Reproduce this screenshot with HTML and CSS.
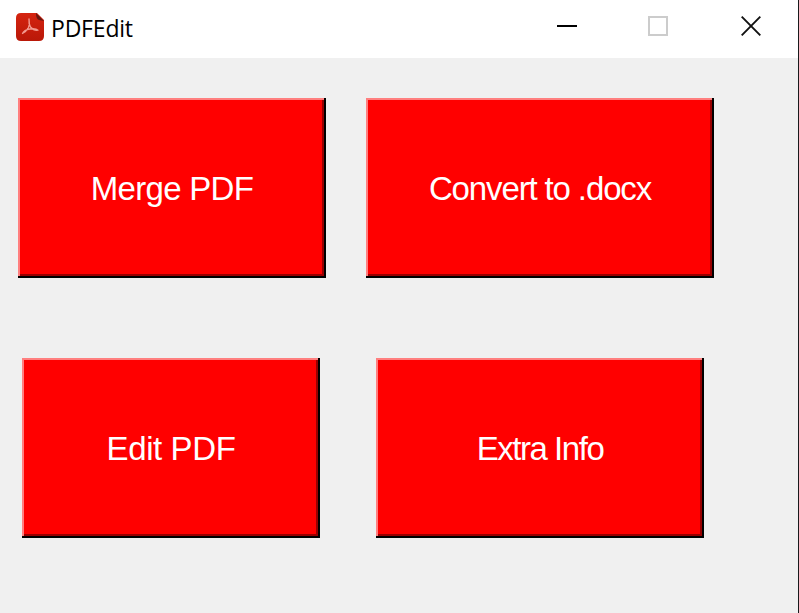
FILE: index.html
```html
<!DOCTYPE html>
<html lang="en">
<head>
<meta charset="utf-8">
<title>PDFEdit</title>
<link rel="stylesheet" href="styles.css">
</head>
<body>
<div class="window">
  <header class="titlebar">
    <svg class="app-icon" width="30" height="30" viewBox="0 0 30 30">
      <defs><linearGradient id="red" x2="0" y2="1"><stop stop-color="#d52410"/><stop offset="1" stop-color="#b91808"/></linearGradient></defs>
      <path d="M6 1H22L29 8V24Q29 29 24 29H6Q1 29 1 24V6Q1 1 6 1Z" fill="url(#red)"/>
      <path d="M21 1L29 9L24 8Q21 7 21 1Z" fill="#681710"/>
      <path d="M14 7Q15 12 13.500 15.500Q11 20 7.500 21.500Q9 18 15 17Q21 16.200 23 18.200Q19 19 15.500 15Q13.500 12 14 7Z" fill="none" stroke="#f29a90" stroke-width="1.300" stroke-linejoin="round"/>
    </svg>
    <h1 class="title">PDFEdit</h1>
    <div class="controls">
      <svg width="20" height="20" viewBox="0 0 20 20"><path d="M0 10H20" stroke="#000" stroke-width="2"/></svg>
      <svg class="maximize" width="20" height="20" viewBox="0 0 20 20"><path d="M1 1H19V19H1Z" fill="none" stroke="#ccc" stroke-width="2"/></svg>
      <svg width="20" height="20" viewBox="0 0 20 20"><path d="M.7 .7L19.300 19.300M19.300 .7L.7 19.300" stroke="#111" stroke-width="1.900"/></svg>
    </div>
  </header>
  <main class="buttons">
    <button class="action merge">Merge PDF</button>
    <button class="action convert">Convert to .docx</button>
    <button class="action edit">Edit PDF</button>
    <button class="action info">Extra Info</button>
  </main>
</div>
</body>
</html>
```

FILE: styles.css
```css
* { box-sizing: border-box; }
body { margin: 0; overflow: hidden; }
.window { width: 799px; height: 613px; background: #f0f0f0; border-right: 1px solid #181a1c; }
.titlebar { display: flex; align-items: flex-start; height: 58px; padding: 12px 37px 0 15px; background: #fff; }
.app-icon { flex: none; }
.title { margin: 0 0 0 6px; font: 400 23px/32px "Open Sans", "Noto Sans", sans-serif; letter-spacing: -0.2px; color: #000; }
.controls { display: flex; width: 204px; margin: 4px 0 0 auto; justify-content: space-between; }
.maximize { margin-right: 2px; }
.buttons { display: grid; grid-template-columns: 308px 348px; grid-auto-rows: 180px; gap: 80px 40px; padding: 40px 0 0 18px; }
.action {
  height: 180px; padding: 2px 0 0; border: 0; border-radius: 0;
  background: #f00; color: #fff;
  box-shadow: inset -2px -2px #000, inset 2px 2px #ff7f7f, inset -4px -4px #990000;
  font: 33px/40px "Liberation Sans", Arial, sans-serif; letter-spacing: -0.7px;
}
.convert { letter-spacing: -1.13px; }
.edit { width: 298px; margin-left: 4px; letter-spacing: -0.4px; }
.info { width: 328px; margin-left: 10px; letter-spacing: -1.45px; }
```
